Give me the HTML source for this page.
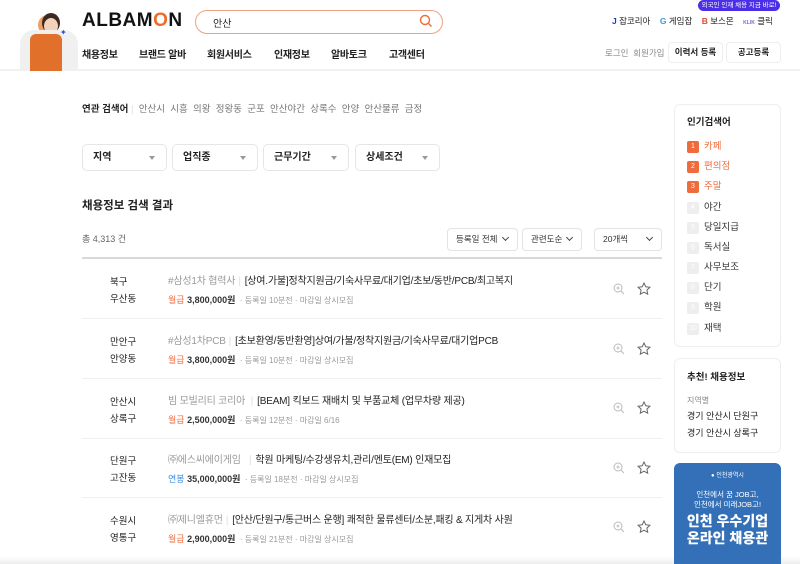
<!DOCTYPE html>
<html><head><meta charset="utf-8"><style>
*{margin:0;padding:0;box-sizing:border-box}
body{width:800px;height:564px;overflow:hidden;background:#fff;font-family:"Liberation Sans","Noto Sans CJK KR",sans-serif;color:#222;position:relative}
.a{position:absolute;white-space:nowrap}
.hdr{position:absolute;left:0;top:0;width:800px;height:71px;border-bottom:2px solid #f1f1f1}
.nav{font-size:10px;font-weight:700;top:46px;color:#222;letter-spacing:-.3px}
.dd{position:absolute;top:144px;height:27px;border:1px solid #e6e6e6;border-radius:5px;font-size:10px;font-weight:700;padding:0 10px;line-height:25px}
.dd i{position:absolute;right:11px;top:11px;width:0;height:0;border-left:3.5px solid transparent;border-right:3.5px solid transparent;border-top:4px solid #999}
.sel{position:absolute;top:228px;height:23px;border:1px solid #e3e3e3;border-radius:4px;font-size:8.5px;padding:0 8px;line-height:21px;color:#333}
.sel b{position:absolute;right:9px;top:6px;width:5px;height:5px;border-right:1.2px solid #444;border-bottom:1.2px solid #444;transform:rotate(45deg)}
.row{position:absolute;left:82px;width:580px;height:60px;border-bottom:1px solid #f0f0f0}
.loc{position:absolute;left:28px;top:15px;font-size:9.5px;line-height:17px;color:#222}
.tt{position:absolute;left:86px;top:13px;font-size:10px;white-space:nowrap;color:#222;letter-spacing:-.2px}
.tt span{color:#999;margin-right:3px}
.tt em{font-style:normal;color:#ddd;margin-right:4px}
.mt{position:absolute;left:86px;top:34px;font-size:8px;color:#999;white-space:nowrap}
.mt b{color:#333;font-size:9px}
.mt .r{color:#f06b3c;font-weight:400}
.mt .bl{color:#3b8ee6;font-weight:400}
.box{position:absolute;left:674px;width:107px;border:1px solid #eee;border-radius:6px}
.rk{position:absolute;left:687px;font-size:9.5px;color:#333;line-height:12px}
.rk i{display:inline-block;width:12px;height:12px;border-radius:2px;background:#eee;color:#fff;font-style:normal;font-size:7px;text-align:center;line-height:12px;margin-right:5px;vertical-align:top}
.rk.o{color:#f06b3c}.rk.o i{background:#f06b3c}
</style></head><body>
<div class="hdr"></div>
<div class="a" style="left:38px;top:15px;width:20px;height:20px;border-radius:50%;background:#f0a060"></div>
<div class="a" style="left:42px;top:13px;width:18px;height:20px;border-radius:50%;background:#3a2a22"></div>
<div class="a" style="left:44px;top:18px;width:14px;height:16px;border-radius:50%;background:#f3d2bc"></div>
<div class="a" style="left:20px;top:30px;width:58px;height:41px;background:#f0f0f0;border-radius:14px 14px 0 0"></div>
<div class="a" style="left:30px;top:34px;width:32px;height:37px;background:#e0702a;border-radius:6px 6px 0 0"></div>
<div class="a" style="left:60px;top:28px;font-size:8px;color:#3050d0">✦</div>
<div class="a" style="left:82px;top:10px;font-size:19px;font-weight:900;letter-spacing:.5px;color:#111">ALBAM<span style="color:#f06b2a">O</span>N</div>
<div class="a" style="left:195px;top:10px;width:248px;height:24px;border:1.5px solid #f0a080;border-radius:12px"></div>
<div class="a" style="left:213px;top:15px;font-size:10px">안산</div>
<svg class="a" style="left:419px;top:14px" width="14" height="14" viewBox="0 0 14 14"><circle cx="6" cy="6" r="4.5" fill="none" stroke="#f06b3c" stroke-width="1.4"/><path d="M9.3 9.3L12.5 12.5" stroke="#f06b3c" stroke-width="1.4"/></svg>
<div class="a nav" style="left:82px">채용정보</div>
<div class="a nav" style="left:139px">브랜드 알바</div>
<div class="a nav" style="left:207px">회원서비스</div>
<div class="a nav" style="left:274px">인재정보</div>
<div class="a nav" style="left:331px">알바토크</div>
<div class="a nav" style="left:389px">고객센터</div>
<div class="a" style="left:698px;top:0;width:82px;height:11px;background:#4a2ee8;border-radius:6px;color:#fff;font-size:6.5px;text-align:center;line-height:11px">외국인 인재 채용 지금 바로!</div>
<div class="a" style="left:612px;top:16px;font-size:8.5px;line-height:10px"><b style="color:#2233cc">J</b> 잡코리아 &nbsp;&nbsp; <b style="color:#3a9ae0">G</b> 게임잡 &nbsp;&nbsp; <b style="color:#e04a2a">B</b> 보스몬 &nbsp;&nbsp; <b style="color:#6a6ae0;font-size:5px">KLIK</b> 클릭</div>
<div class="a" style="left:605px;top:48px;font-size:8.5px;color:#888;line-height:10px">로그인 &nbsp;회원가입</div>
<div class="a" style="left:668px;top:42px;width:55px;height:21px;border:1px solid #eee;border-radius:4px;font-size:8.5px;font-weight:700;text-align:center;line-height:19px">이력서 등록</div>
<div class="a" style="left:726px;top:42px;width:55px;height:21px;border:1px solid #eee;border-radius:4px;font-size:8.5px;font-weight:700;text-align:center;line-height:19px">공고등록</div>

<div class="a" style="left:82px;top:104px;font-size:9.5px;color:#777;line-height:12px"><b style="color:#222">연관 검색어</b> <span style="color:#ddd">|</span> &nbsp;안산시 &nbsp;시흥 &nbsp;의왕 &nbsp;정왕동 &nbsp;군포 &nbsp;안산야간 &nbsp;상록수 &nbsp;안양 &nbsp;안산물류 &nbsp;금정</div>
<div class="dd" style="left:82px;width:85px">지역<i></i></div>
<div class="dd" style="left:172px;width:86px">업직종<i></i></div>
<div class="dd" style="left:263px;width:86px">근무기간<i></i></div>
<div class="dd" style="left:355px;width:85px">상세조건<i></i></div>
<div class="a" style="left:82px;top:199px;font-size:11.5px;font-weight:700;line-height:14px">채용정보 검색 결과</div>
<div class="a" style="left:82px;top:234px;font-size:9px;color:#666;line-height:11px">총 4,313 건</div>
<div class="sel" style="left:447px;width:71px">등록일 전체<b></b></div>
<div class="sel" style="left:522px;width:60px">관련도순<b></b></div>
<div class="sel" style="left:594px;width:68px">20개씩<b></b></div>
<div class="a" style="left:82px;top:257px;width:580px;height:2px;background:#d8d8d8"></div>

<div class="row" style="top:259px"><div class="loc">북구<br>우산동</div><div class="tt"><span>#삼성1차 협력사</span><em>|</em>[상여.가불]정착지원금/기숙사무료/대기업/초보/동반/PCB/최고복지</div><div class="mt"><b><span class="r">월급</span> 3,800,000원</b> &nbsp;· 등록일 10분전 · 마감일 상시모집</div></div>
<div class="row" style="top:319px"><div class="loc">만안구<br>안양동</div><div class="tt"><span>#삼성1차PCB</span><em>|</em>[초보환영/동반환영]상여/가불/정착지원금/기숙사무료/대기업PCB</div><div class="mt"><b><span class="r">월급</span> 3,800,000원</b> &nbsp;· 등록일 10분전 · 마감일 상시모집</div></div>
<div class="row" style="top:379px"><div class="loc">안산시<br>상록구</div><div class="tt"><span>빔 모빌리티 코리아</span> <em>|</em>[BEAM] 킥보드 재배치 및 부품교체 (업무차량 제공)</div><div class="mt"><b><span class="r">월급</span> 2,500,000원</b> &nbsp;· 등록일 12분전 · 마감일 6/16</div></div>
<div class="row" style="top:438px"><div class="loc">단원구<br>고잔동</div><div class="tt"><span>㈜에스씨에이게임</span> &nbsp;<em>|</em>학원 마케팅/수강생유치,관리/멘토(EM) 인재모집</div><div class="mt"><b><span class="bl">연봉</span> 35,000,000원</b> &nbsp;· 등록일 18분전 · 마감일 상시모집</div></div>
<div class="row" style="top:498px;border:0"><div class="loc">수원시<br>영통구</div><div class="tt"><span>㈜제니엘휴먼</span><em>|</em>[안산/단원구/통근버스 운행] 쾌적한 물류센터/소분,패킹 &amp; 지게차 사원</div><div class="mt"><b><span class="r">월급</span> 2,900,000원</b> &nbsp;· 등록일 21분전 · 마감일 상시모집</div></div>

<svg class="a" style="left:0;top:0" width="800" height="564">
<g fill="none" stroke="#bbb" stroke-width="1">
<g id="z"><circle cx="618" cy="288" r="4"/><path d="M621 291l3 3M616.5 288h3M618 286.5v3"/></g>
<use href="#z" y="60"/><use href="#z" y="119"/><use href="#z" y="179"/><use href="#z" y="238"/>
</g>
<g fill="none" stroke="#666" stroke-width="1">
<path id="s" d="M644 283l1.8 3.8 4.1.5-3 2.8.8 4.1-3.7-2-3.7 2 .8-4.1-3-2.8 4.1-.5z"/>
<use href="#s" y="60"/><use href="#s" y="119"/><use href="#s" y="179"/><use href="#s" y="238"/>
</g>
</svg>
<div class="a" style="left:0;top:556px;width:800px;height:8px;background:linear-gradient(#fff,#eee)"></div>

<div class="box" style="top:104px;height:243px"></div>
<div class="a" style="left:687px;top:117px;font-size:9.5px;font-weight:700;line-height:12px">인기검색어</div>
<div class="rk o" style="top:141px"><i>1</i>카페</div>
<div class="rk o" style="top:161px"><i>2</i>편의점</div>
<div class="rk o" style="top:181px"><i>3</i>주말</div>
<div class="rk" style="top:202px"><i>4</i>야간</div>
<div class="rk" style="top:222px"><i>5</i>당일지급</div>
<div class="rk" style="top:242px"><i>6</i>독서실</div>
<div class="rk" style="top:262px"><i>7</i>사무보조</div>
<div class="rk" style="top:282px"><i>8</i>단기</div>
<div class="rk" style="top:302px"><i>9</i>학원</div>
<div class="rk" style="top:323px"><i>10</i>재택</div>
<div class="box" style="top:358px;height:95px"></div>
<div class="a" style="left:687px;top:372px;font-size:9.5px;font-weight:700;line-height:12px">추천! 채용정보</div>
<div class="a" style="left:687px;top:396px;font-size:8px;color:#888;line-height:10px">지역별</div>
<div class="a" style="left:687px;top:411px;font-size:9px;line-height:11px">경기 안산시 단원구</div>
<div class="a" style="left:687px;top:428px;font-size:9px;line-height:11px">경기 안산시 상록구</div>
<div class="a" style="left:674px;top:463px;width:107px;height:101px;background:#3470b8;border-radius:6px 6px 0 0;color:#fff;text-align:center">
<div style="font-size:6px;margin-top:7px">● 인천광역시</div>
<div style="font-size:7.5px;margin-top:11px;line-height:10px">인천에서 꿈 JOB고,<br>인천에서 미래JOB고!</div>
<div style="font-size:14px;font-weight:900;line-height:17px;margin-top:3px">인천 우수기업<br>온라인 채용관</div>
</div>
</body></html>
